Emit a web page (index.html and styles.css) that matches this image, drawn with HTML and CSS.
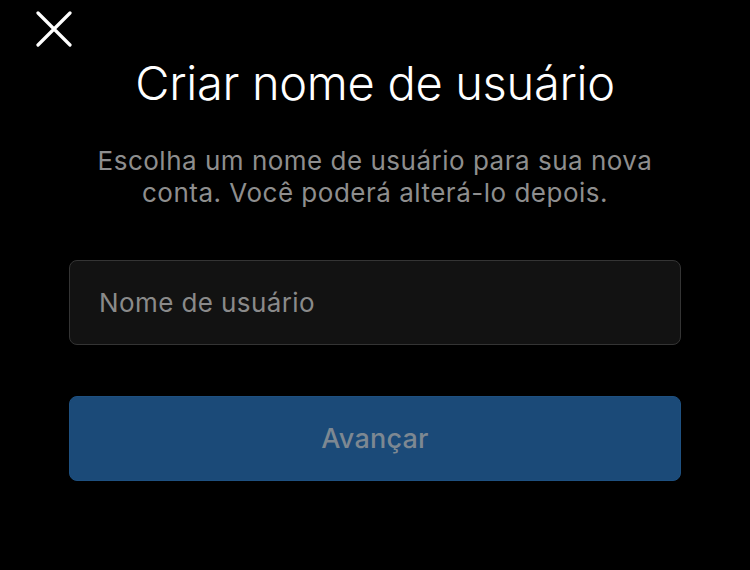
FILE: index.html
```html
<!DOCTYPE html>
<html lang="pt-BR">
<head>
<meta charset="utf-8">
<title>Criar nome de usuário</title>
<link rel="stylesheet" href="styles.css">
</head>
<body>
<main class="screen">
  <header class="topbar">
    <button class="close" type="button" aria-label="Fechar">
      <svg width="36" height="36" viewBox="0 0 36 36" aria-hidden="true">
        <path d="M2 2 L34 34 M34 2 L2 34" stroke="#fff" stroke-width="3.2" stroke-linecap="round" fill="none"/>
      </svg>
    </button>
  </header>
  <h1 class="title">Criar nome de usuário</h1>
  <p class="subtitle">Escolha um nome de usuário para sua nova<br>conta. Você poderá alterá-lo depois.</p>
  <form class="form">
    <input class="field" type="text" placeholder="Nome de usuário">
    <button class="next" type="button" disabled>Avançar</button>
  </form>
</main>
</body>
</html>
```
FILE: styles.css
```css
html, body {
  margin: 0;
  background: #000;
}

.screen {
  width: 750px;
  height: 570px;
  display: flex;
  flex-direction: column;
  align-items: center;
  font-family: Inter, "Noto Sans", sans-serif;
  color: #fff;
}

.topbar {
  align-self: stretch;
  height: 46px;
  padding-left: 36px;
  padding-top: 11px;
  box-sizing: border-box;
}

.close {
  display: block;
  padding: 0;
  border: 0;
  background: none;
  width: 36px;
  height: 36px;
}

.title {
  margin: 9px 0 0;
  font-size: 47px;
  font-weight: 300;
  line-height: 56px;
  letter-spacing: -0.3px;
  white-space: nowrap;
}

.subtitle {
  margin: 34px 0 0;
  text-align: center;
  font-size: 26px;
  line-height: 32px;
  letter-spacing: 0.5px;
  color: #8e8e8e;
  white-space: nowrap;
}

.form {
  margin-top: 51px;
  width: 612px;
  display: flex;
  flex-direction: column;
  gap: 51px;
}

.field {
  height: 85px;
  box-sizing: border-box;
  border: 1.5px solid #343434;
  border-radius: 8px;
  background: #121212;
  padding: 0 29px;
  font-family: inherit;
  font-size: 26px;
  letter-spacing: 0.4px;
  color: #fff;
  outline: none;
}

.field::placeholder {
  color: #8a8a8a;
}

.next {
  height: 85px;
  border: 1.5px solid #1e5080;
  border-radius: 8px;
  background: #1b4a78;
  font-family: inherit;
  font-size: 27px;
  font-weight: 500;
  letter-spacing: 0.2px;
  color: #7d8892;
}
```
